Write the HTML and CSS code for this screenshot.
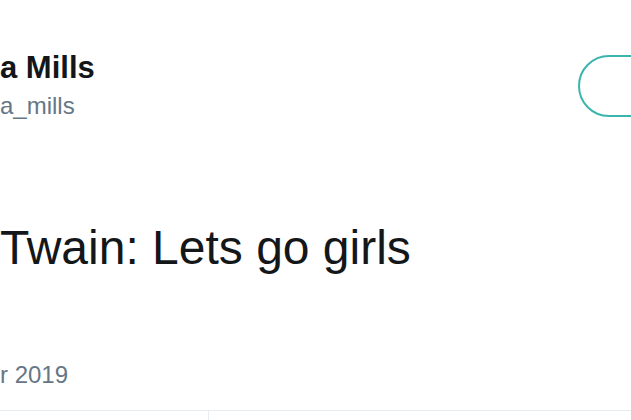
FILE: index.html
```html
<!DOCTYPE html>
<html>
<head>
<meta charset="utf-8">
<link rel="stylesheet" href="styles.css">
</head>
<body>
<div class="tweet">
  <div class="header">
    <div class="user">
      <div class="name">a Mills</div>
      <div class="handle">a_mills</div>
    </div>
    <div class="follow"></div>
  </div>
  <div class="text">Twain: Lets go girls</div>
  <div class="date">r 2019</div>
  <div class="stats">
    <div class="cell first"></div>
    <div class="cell"></div>
  </div>
</div>
</body>
</html>
```
FILE: styles.css
```css
html, body {
  margin: 0;
  padding: 0;
  background: #ffffff;
}
.tweet {
  width: 631px;
  height: 420px;
  overflow: hidden;
  font-family: "Liberation Sans", Arial, sans-serif;
  color: #14171a;
}
.header {
  display: flex;
  align-items: flex-start;
  padding-top: 51px;
}
.user {
  flex: 1;
}
.name {
  font-size: 31px;
  font-weight: bold;
  line-height: 34px;
}
.handle {
  margin-top: 6px;
  font-size: 24px;
  line-height: 30px;
  color: #657786;
}
.follow {
  flex: 0 0 auto;
  margin-top: 4px;
  width: 118px;
  height: 58px;
  border: 2px solid #3ab4ae;
  border-radius: 31px;
  margin-right: -69px;
}
.text {
  margin-top: 99px;
  font-size: 48px;
  line-height: 56px;
}
.date {
  margin-top: 84px;
  font-size: 24px;
  line-height: 30px;
  color: #657786;
}
.stats {
  margin-top: 20px;
  border-top: 1px solid #e6ecf0;
  display: flex;
  height: 9px;
}
.cell {
  flex: 1;
}
.cell.first {
  flex: 0 0 208px;
  border-right: 1px solid #e6ecf0;
}
```
